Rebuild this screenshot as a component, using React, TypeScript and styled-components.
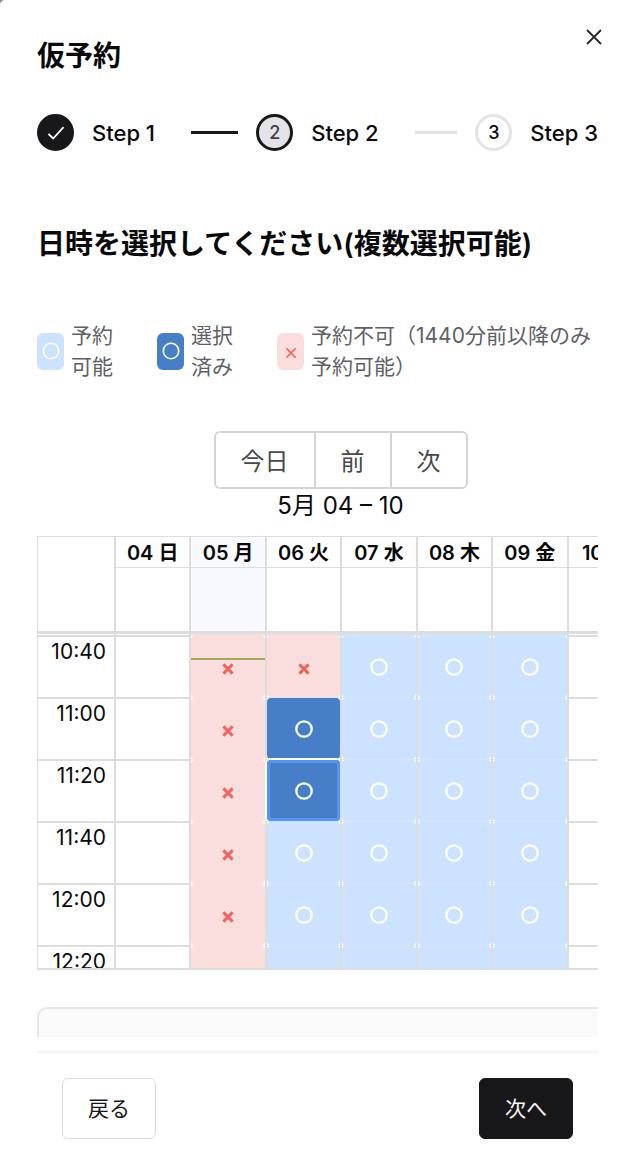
import React from "react";
import styled, { createGlobalStyle, css } from "styled-components";

const color = {
  ink: "#09090b",
  primary: "#18181b",
  muted: "#5f5f68",
  rule: "#e4e4e7",
  grid: "#dddddd",
  open: "#cce2fe",
  picked: "#467fc8",
  closed: "#f9dedd",
  cross: "#ee655d",
  today: "#f8f9fe",
  focus: "#5595f6",
};

const Global = createGlobalStyle`
  * { box-sizing: border-box; }
  body {
    margin: 0;
    background: #8f8f8f;
    color: ${color.ink};
    font-family: Inter, "Noto Sans CJK JP", sans-serif;
  }
  button { font: inherit; color: inherit; cursor: pointer; }
`;

const Sheet = styled.main`
  position: relative;
  min-height: 100vh;
  padding: 37px 26px 17px 37px;
  background: #fff;
  border-top-left-radius: 5px;
`;

const CloseButton = styled.button`
  position: absolute;
  top: 24px;
  right: 17px;
  display: flex;
  padding: 0;
  border: 0;
  background: none;
`;

const Title = styled.h1`
  margin: 0;
  font-size: 28px;
  line-height: 38px;
  font-weight: 600;
`;

const Steps = styled.ol`
  display: flex;
  margin: 39px 0 0;
  padding: 0;
  list-style: none;
`;

const Step = styled.li<{ $last?: boolean }>`
  display: flex;
  align-items: center;
  flex: ${(p) => (p.$last ? "none" : "1 1 0")};
  font-size: 22px;
  font-weight: 500;
  white-space: nowrap;
`;

type StepState = "done" | "current" | "next";

const Bullet = styled.span<{ $state: StepState }>`
  display: flex;
  align-items: center;
  justify-content: center;
  flex: none;
  width: 37px;
  height: 37px;
  margin-right: 18px;
  border: 3px solid ${(p) => (p.$state === "next" ? color.rule : color.primary)};
  border-radius: 50%;
  background: ${(p) =>
    p.$state === "done" ? color.primary : p.$state === "current" ? color.rule : "#fff"};
  color: ${(p) => (p.$state === "current" ? "#3f3f46" : color.ink)};
  font-size: 18px;
`;

const StepLine = styled.span<{ $done: boolean }>`
  flex: 1;
  height: 3px;
  margin: 0 18px 0 36px;
  background: ${(p) => (p.$done ? color.primary : color.rule)};
`;

const Heading = styled.h2`
  margin: 74px 0 0;
  font-size: 28px;
  line-height: 38px;
  font-weight: 600;
`;

const Legend = styled.ul`
  display: flex;
  gap: 44px;
  margin: 57px 0 0;
  padding: 0;
  list-style: none;
`;

const LegendItem = styled.li<{ $wide?: boolean }>`
  display: flex;
  align-items: center;
  gap: 7px;
  flex: ${(p) => (p.$wide ? "1" : "none")};
  color: ${color.muted};
  font-size: 21px;
  line-height: 31px;
  font-weight: 400;
`;

const LegendText = styled.span<{ $wide?: boolean }>`
  ${(p) => !p.$wide && "width: 2em;"}
`;

type Kind = "open" | "picked" | "closed";

const Swatch = styled.span<{ $kind: Kind }>`
  display: flex;
  align-items: center;
  justify-content: center;
  flex: none;
  width: 27px;
  height: 37px;
  border-radius: 6px;
  background: ${(p) => color[p.$kind]};
`;

const Clip = styled.div`
  overflow: hidden;
`;

const Wide = styled.div`
  min-width: 607px;
`;

const Toolbar = styled.div`
  display: flex;
  flex-direction: column;
  align-items: center;
  margin-top: 49px;
`;

const ButtonGroup = styled.div`
  display: flex;
  border: 2px solid #d4d4d4;
  border-radius: 6px;
`;

const GroupButton = styled.button`
  height: 54px;
  padding: 0 25px 2px;
  border: 0;
  background: none;
  color: #46494b;
  font-size: 24px;
  font-weight: 400;
  & + & {
    border-left: 2px solid #d4d4d4;
  }
`;

const Range = styled.div`
  font-size: 24px;
  line-height: 34px;
  font-weight: 400;
`;

const Calendar = styled.div`
  height: 434px;
  margin-top: 13px;
  overflow: hidden;
  border: 1px solid ${color.grid};
  border-width: 1px 2px 2px 1px;
`;

const Grid = styled.table`
  width: 100%;
  table-layout: fixed;
  border-collapse: separate;
  border-spacing: 0;
`;

const AxisCol = styled.col`
  width: 76px;
`;

const line = css`
  padding: 0;
  border: 0 solid ${color.grid};
`;

const Corner = styled.td`
  ${line}
  border-bottom-width: 3px;
`;

const DayHead = styled.th<{ $today: boolean }>`
  ${line}
  height: 31px;
  padding-top: 2px;
  border-width: 0 0 1px 2px;
  background: ${(p) => (p.$today ? color.today : "#fff")};
  font-size: 20px;
  line-height: 28px;
  font-weight: 600;
  white-space: nowrap;
`;

const AllDay = styled.td<{ $today: boolean }>`
  ${line}
  height: 66px;
  border-width: 0 0 3px 2px;
  background: ${(p) => (p.$today ? color.today : "#fff")};
`;

const LeadCell = styled.td<{ $kind?: Kind }>`
  ${line}
  height: 1px;
  border-left-width: 2px;
  background: ${(p) => (p.$kind ? color[p.$kind] : "#fff")};
  &:first-child {
    border-left-width: 0;
  }
`;

const TimeHead = styled.th`
  ${line}
  height: 62px;
  padding: 1px 8px 0 0;
  border-top-width: 2px;
  font-size: 21px;
  line-height: 28px;
  font-weight: 400;
  text-align: right;
  vertical-align: top;
`;

const slotLine = (kind: Kind) => (kind === "closed" ? "#f3dfdf" : "#d6e4f6");

const SlotCell = styled.td<{ $kind?: Kind }>`
  ${line}
  position: relative;
  height: 62px;
  border-left-width: 2px;
  ${(p) =>
    p.$kind
      ? css`
          padding-top: 1px;
          background: linear-gradient(${slotLine(p.$kind)}, ${slotLine(p.$kind)}) top / 100%
            1px no-repeat #fff;
        `
      : "border-top-width: 2px;"}
`;

const Slot = styled.button<{ $kind: Kind; $focused: boolean }>`
  display: flex;
  align-items: center;
  justify-content: center;
  width: 100%;
  height: 61px;
  padding: 1px 0 0;
  border: 0;
  border-radius: 4px;
  background: ${(p) => color[p.$kind]};
  ${(p) =>
    p.$focused &&
    css`
      position: relative;
      box-shadow: inset 0 0 0 3px ${color.focus}, 0 0 0 2px #fff;
    `}
`;

const NowLine = styled.span`
  position: absolute;
  top: 23px;
  left: 0;
  right: 0;
  height: 2px;
  background: #9aac5a;
`;

const Panel = styled.div`
  height: 30px;
  margin-top: 37px;
  border: 2px solid #e6e6e6;
  border-bottom: 0;
  border-radius: 10px 10px 0 0;
  background: #fafafa;
`;

const Footer = styled.footer`
  display: flex;
  justify-content: space-between;
  margin-top: 14px;
  padding: 25px 25px 0;
  border-top: 2px solid #f4f4f5;
`;

const ActionButton = styled.button<{ $primary?: boolean }>`
  height: 61px;
  padding: 0 25px 4px;
  border: 1px solid ${(p) => (p.$primary ? color.primary : "#dcdcdf")};
  border-radius: 6px;
  background: ${(p) => (p.$primary ? color.primary : "#fff")};
  color: ${(p) => (p.$primary ? "#fafafa" : color.primary)};
  font-size: 21px;
  font-weight: 400;
`;

const Ring = ({ weight }: { weight: number }) => (
  <svg width="18" height="18" viewBox="0 0 18 18" fill="none" aria-hidden="true">
    <circle cx="9" cy="9" r="7.7" stroke="#fff" strokeWidth={weight} />
  </svg>
);

const Cross = ({ weight }: { weight: number }) => (
  <svg width="12" height="16" viewBox="0 0 12 16" fill="none" aria-hidden="true">
    <path d="M1.4 5.4l9.2 9.2M10.6 5.4l-9.2 9.2" stroke={color.cross} strokeWidth={weight} />
  </svg>
);

const Mark = ({ kind, weight }: { kind: Kind; weight: number }) =>
  kind === "closed" ? <Cross weight={weight} /> : <Ring weight={weight} />;

const days = ["04 日", "05 月", "06 火", "07 水", "08 木", "09 金", "10 土"];
const times = ["10:40", "11:00", "11:20", "11:40", "12:00", "12:20"];
const picked = ["11:00", "11:20"];
const TODAY = 1;

const kindOf = (day: number, time: string): Kind | undefined => {
  if (day === 0 || day === 6) return undefined;
  if (day === 1) return "closed";
  if (day === 2 && time < "11:00") return "closed";
  if (day === 2 && picked.includes(time)) return "picked";
  return "open";
};

const kindLabel: Record<Kind, string> = {
  open: "予約可能",
  picked: "選択済み",
  closed: "予約不可",
};

export default function App() {
  return (
    <>
      <Global />
      <Sheet>
        <CloseButton type="button" aria-label="閉じる">
          <svg width="26" height="26" viewBox="0 0 26 26" fill="none" aria-hidden="true">
            <path d="M6 6l14 14M20 6L6 20" stroke="#27272a" strokeWidth="1.8" />
          </svg>
        </CloseButton>
        <Title>仮予約</Title>

        <Steps>
          <Step>
            <Bullet $state="done">
              <svg width="18" height="14" viewBox="0 0 18 14" fill="none" aria-hidden="true">
                <path d="M1.5 8l4.7 4.5L16.5 1.2" stroke="#fff" strokeWidth="1.8" />
              </svg>
            </Bullet>
            Step 1
            <StepLine $done />
          </Step>
          <Step aria-current="step">
            <Bullet $state="current">2</Bullet>
            Step 2
            <StepLine $done={false} />
          </Step>
          <Step $last>
            <Bullet $state="next">3</Bullet>
            Step 3
          </Step>
        </Steps>

        <Heading>日時を選択してください(複数選択可能)</Heading>

        <Legend>
          <LegendItem>
            <Swatch $kind="open">
              <Mark kind="open" weight={1.6} />
            </Swatch>
            <LegendText>予約可能</LegendText>
          </LegendItem>
          <LegendItem>
            <Swatch $kind="picked">
              <Mark kind="picked" weight={1.6} />
            </Swatch>
            <LegendText>選択済み</LegendText>
          </LegendItem>
          <LegendItem $wide>
            <Swatch $kind="closed">
              <Mark kind="closed" weight={1.6} />
            </Swatch>
            <LegendText $wide>予約不可（1440分前以降のみ予約可能）</LegendText>
          </LegendItem>
        </Legend>

        <Clip>
          <Wide>
            <Toolbar>
              <ButtonGroup>
                <GroupButton type="button">今日</GroupButton>
                <GroupButton type="button">前</GroupButton>
                <GroupButton type="button">次</GroupButton>
              </ButtonGroup>
              <Range>5月 04 – 10</Range>
            </Toolbar>

            <Calendar>
              <Grid>
                <colgroup>
                  <AxisCol />
                  {days.map((d) => (
                    <col key={d} />
                  ))}
                </colgroup>
                <thead>
                  <tr>
                    <Corner rowSpan={2} />
                    {days.map((d, i) => (
                      <DayHead key={d} scope="col" $today={i === TODAY}>
                        {d}
                      </DayHead>
                    ))}
                  </tr>
                  <tr>
                    {days.map((d, i) => (
                      <AllDay key={d} $today={i === TODAY} />
                    ))}
                  </tr>
                </thead>
                <tbody>
                  <tr aria-hidden="true">
                    <LeadCell />
                    {days.map((d, i) => (
                      <LeadCell key={d} $kind={kindOf(i, "10:20")} />
                    ))}
                  </tr>
                  {times.map((time, row) => (
                    <tr key={time}>
                      <TimeHead scope="row">{time}</TimeHead>
                      {days.map((d, i) => {
                        const kind = kindOf(i, time);
                        return (
                          <SlotCell key={d} $kind={kind}>
                            {kind && (
                              <Slot
                                type="button"
                                $kind={kind}
                                $focused={kind === "picked" && time === "11:20"}
                                disabled={kind === "closed"}
                                aria-label={`${d} ${time} ${kindLabel[kind]}`}
                              >
                                <Mark kind={kind} weight={kind === "closed" ? 3 : 2.3} />
                              </Slot>
                            )}
                            {i === TODAY && row === 0 && <NowLine />}
                          </SlotCell>
                        );
                      })}
                    </tr>
                  ))}
                </tbody>
              </Grid>
            </Calendar>

            <Panel />
          </Wide>
        </Clip>

        <Footer>
          <ActionButton type="button">戻る</ActionButton>
          <ActionButton type="button" $primary>
            次へ
          </ActionButton>
        </Footer>
      </Sheet>
    </>
  );
}
